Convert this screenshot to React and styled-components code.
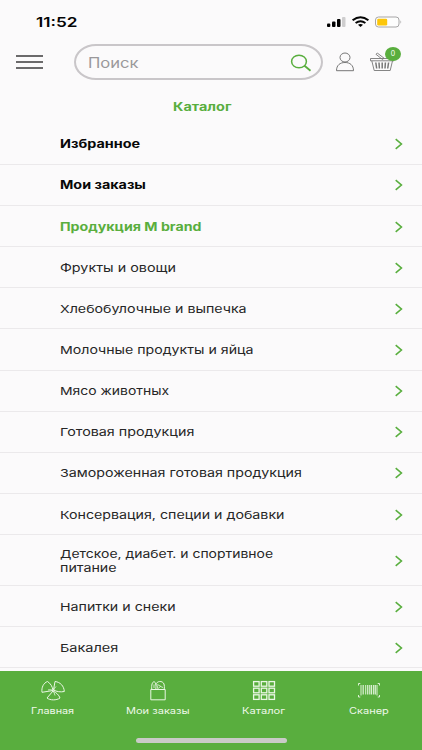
import React from 'react'
import styled, { createGlobalStyle } from 'styled-components'

const GREEN = '#59ae3e';

const GlobalStyle = createGlobalStyle`
	* {
		box-sizing: border-box;
	}

	body {
		margin: 0;
		background: #fbfafb;
		font-family: Inter, "Open Sans", sans-serif;
	}
`

const Screen = styled.div`
	display: flex;
	flex-direction: column;
	width: 422px;
	height: 750px;
	overflow: hidden;
	background: #fbfafb;
`

const StatusBar = styled.div`
	display: flex;
	justify-content: space-between;
	height: 44px;
	padding: 15px 20px 0 36px;
	color: #050505;
	font-size: 13.5px;
	font-weight: 600;
	line-height: 15px;
`

const StatusIcons = styled.svg`
	display: block;
	width: 76px;
	height: 14px;
`

const Header = styled.header`
	display: flex;
	align-items: center;
	height: 36px;
	padding: 0 20px 0 16px;
	flex: none;
`

const MenuButton = styled.div`
	display: flex;
	flex-direction: column;
	justify-content: space-between;
	width: 27px;
	height: 14px;
	margin-right: 31px;

	i {
		height: 2px;
		background: #6b6a6b;
	}
`

const Search = styled.div`
	display: flex;
	align-items: center;
	justify-content: space-between;
	width: 249px;
	height: 36px;
	padding: 1px 9px 0 12px;
	border: 2px solid #c9c6c9;
	border-radius: 22px / 18px;
	color: #9a989a;
	font-size: 14px;
`

const SearchIcon = styled.svg`
	width: 22px;
	height: 18px;
`

const UserIcon = styled.svg`
	width: 20px;
	height: 20px;
	margin-left: 12px;
`

const Basket = styled.div`
	position: relative;
	height: 20px;
	margin-left: 14px;

	svg {
		display: block;
		width: 26px;
		height: 20px;
	}
`

const Badge = styled.span`
	position: absolute;
	top: -5px;
	left: 16px;
	width: 16px;
	height: 14px;
	border-radius: 50%;
	background: ${GREEN};
	color: #fff;
	font-size: 7px;
	line-height: 14px;
	text-align: center;
`

const Title = styled.h1`
	display: flex;
	justify-content: center;
	align-items: center;
	flex: none;
	height: 43.7px;
	margin: 0;
	padding: 10px 18px 0 0;
	color: ${GREEN};
	font-size: 11.5px;
	font-weight: 700;
`

const List = styled.div`
	flex: 1;
`

const Row = styled.div`
	display: flex;
	align-items: center;
	justify-content: space-between;
	height: ${(p) => (p.$tall ? 51 : 41.15)}px;
	padding: 1px 18px 0 60px;
	border-bottom: 1px solid #ebe9eb;
	color: ${(p) => (p.$accent ? GREEN : p.$bold ? '#080808' : '#262626')};
	font-size: ${(p) => (p.$bold ? 11.5 : 11)}px;
	font-weight: ${(p) => (p.$bold ? 650 : 400)};
	line-height: 14px;
`

const Lines = styled.div`
	display: flex;
	flex-direction: column;
`

const Chevron = styled.svg`
	width: 10px;
	height: 12px;
`

const TabBar = styled.nav`
	display: grid;
	grid-template-columns: repeat(4, 1fr);
	grid-template-rows: 67px 5px;
	flex: none;
	height: 79px;
	background: ${GREEN};
`

const Tab = styled.div`
	display: flex;
	flex-direction: column;
	align-items: center;
	padding-top: 9px;
	color: #eef8e9;
	font-size: 8.8px;
	line-height: 12px;

	svg {
		width: 24px;
		height: 21px;
		margin-bottom: 4px;
	}
`

const HomeIndicator = styled.div`
	grid-column: 1 / -1;
	justify-self: center;
	width: 151px;
	height: 5px;
	border-radius: 3px;
	background: #c9cbc7;
`

const FitBox = styled.span`
	display: block;
	flex: none;
	white-space: nowrap;

	span {
		display: inline-block;
		transform-origin: 0 50%;
	}
`

// Widens the letters until the text fills the given width.
function Fit({ width, children }) {
	const ref = React.useRef(null);
	const [scale, setScale] = React.useState(1);
	React.useLayoutEffect(() => {
		setScale(width / ref.current.offsetWidth);
	}, [width, children]);
	return (
		<FitBox style={{ width }}>
			<span ref={ref} style={{ transform: `scaleX(${scale})` }}>{children}</span>
		</FitBox>
	);
}

const rows = [
	{ lines: [['Избранное', 80]], bold: true },
	{ lines: [['Мои заказы', 86]], bold: true },
	{ lines: [['Продукция M brand', 142]], bold: true, accent: true },
	{ lines: [['Фрукты и овощи', 116]] },
	{ lines: [['Хлебобулочные и выпечка', 186]] },
	{ lines: [['Молочные продукты и яйца', 193]] },
	{ lines: [['Мясо животных', 109]] },
	{ lines: [['Готовая продукция', 134]] },
	{ lines: [['Замороженная готовая продукция', 242]] },
	{ lines: [['Консервация, специи и добавки', 225]] },
	{ lines: [['Детское, диабет. и спортивное', 213], ['питание', 57]] },
	{ lines: [['Напитки и снеки', 115]] },
	{ lines: [['Бакалея', 58]] },
];

function HomeIcon() {
	return (
		<svg viewBox="0 0 24 21" fill="none" stroke="#eaf7e4" strokeWidth="1" strokeLinejoin="round">
			<path d="M12 10.500 1 12.300C.3 7.500 2.500 3 6.500 1.500 9.500 3.500 11.500 6.500 12 10.500Z" />
			<path d="M12.500 10 14 1.500c5.200.5 9 4.500 9.300 10-3.800.8-7.600.2-10.800-1.500Z" />
			<path d="M12 11 6 18c3 2.400 9.500 2.600 13 0-1-3-3.800-5.500-7-7Z" />
			<path d="M7 10c1.500-.5 3.500-.4 5 .5M15 6.500c-1.200 1-2 2.300-2.500 4M14 15.500c-.3-1.800-1-3.300-2-4.500" strokeWidth=".8" />
		</svg>
	);
}

function BagIcon() {
	return (
		<svg viewBox="0 0 24 21" fill="none" stroke="#eaf7e4" strokeWidth="1">
			<path d="M4.800 9.500h14.400v10.300H4.800z" />
			<path d="M5.800 9.500C5.300 5 6.300 1.800 8 1.800S10.300 5 9.800 9.500M10 4.500c.5-3.500 6.500-4.300 8-.5.5 1.500.5 3.500.2 5.500" />
			<path d="M8 4.500v3.500M10.800 4.500 12 9M11.500 4.500l3.500 2M12.500 8l2-1.500 2.500 1" strokeWidth=".8" />
		</svg>
	);
}

function CatalogIcon() {
	return (
		<svg viewBox="0 0 24 21" fill="none" stroke="#eaf7e4" strokeWidth="1.300">
			{[1.600, 8.200, 14.800].map((y) => [1.600, 9.300, 17].map((x) => (
				<rect key={x + '-' + y} x={x} y={y} width="5.500" height="4.600" />
			)))}
		</svg>
	);
}

function ScannerIcon() {
	return (
		<svg viewBox="0 0 24 21" fill="none" stroke="#eaf7e4">
			<path d="M1.500 5.500V3.500h1.800M20.700 3.500h1.800v2M1.500 15v2h1.800M20.700 17h1.800v-2" strokeWidth=".9" />
			<path d="M4 5v10.500M8.700 5v9.500M14.500 5v9.500M20 5v10.500" strokeWidth=".9" />
			<path d="M6.200 5v9.500M10.700 5v9.500M12.800 5v9.500M16.500 5v9.500M18.300 5v9.500" strokeWidth="1.300" opacity=".85" />
		</svg>
	);
}

const tabs = [
	{ label: 'Главная', width: 43, Icon: HomeIcon },
	{ label: 'Мои заказы', width: 64, Icon: BagIcon },
	{ label: 'Каталог', width: 43, Icon: CatalogIcon },
	{ label: 'Сканер', width: 40, Icon: ScannerIcon },
];

export default function App() {
	return (
		<Screen>
			<GlobalStyle />
			<StatusBar>
				<Fit width={42}>11:52</Fit>
				<StatusIcons viewBox="0 0 76 14">
					<rect x="1" y="8.500" width="3.300" height="3.500" rx="1" />
					<rect x="6" y="6.500" width="3.500" height="5.500" rx="1" />
					<rect x="11" y="4" width="3.500" height="8" rx="1" />
					<rect x="16" y="2" width="3.500" height="10" rx="1" fill="#cfcecf" />
					<g fill="none" stroke="#050505" strokeWidth="2">
						<path d="M26.600 5.300q7.900-6 15.800 0" />
						<path d="M29.600 8q4.900-3.500 9.800 0" />
					</g>
					<path d="m32 9.700q2.500-1.600 5 0l-2.500 2.200z" />
					<rect x="49.500" y="2" width="23.500" height="10" rx="3" fill="#fdfdfd" stroke="#a6a5a6" />
					<rect x="51.200" y="3.700" width="10" height="6.700" rx="1.200" fill="#fcc60a" />
					<path d="M74.500 5.300q1.500 1.700 0 3.400z" fill="#999" />
				</StatusIcons>
			</StatusBar>
			<Header>
				<MenuButton><i /><i /><i /></MenuButton>
				<Search>
					<Fit width={51}>Поиск</Fit>
					<SearchIcon viewBox="0 0 22 18" fill="none" stroke={GREEN} strokeWidth="1.500">
						<ellipse cx="9" cy="7.500" rx="7.400" ry="6.300" />
						<path d="m14.500 11.700 6 5" strokeWidth="1.800" />
					</SearchIcon>
				</Search>
				<UserIcon viewBox="0 0 20 20" fill="none" stroke="#777" strokeWidth="1">
					<ellipse cx="10" cy="5.500" rx="5" ry="4.500" />
					<path d="M1.500 18.700c0-5.500 3.500-8.200 8.500-8.200s8.500 2.700 8.500 8.200z" />
				</UserIcon>
				<Basket>
					<svg viewBox="0 0 26 20" fill="none" stroke="#777" strokeWidth=".9">
						<path d="M1.500 6.500h23.500v2.300H1.500zM2.800 8.800 5.200 18.500h16l2.300-9.700" />
						<path d="m6.800 10.500.9 6M10 10.500l.4 6M13.200 10.500v6M16.400 10.500l-.4 6M19.600 10.500l-.9 6" strokeWidth="1.500" />
						<path d="m7 2.300 1.300-1.300 6.700 5.200-1.500 1.300z" />
					</svg>
					<Badge>0</Badge>
				</Basket>
			</Header>
			<Title><Fit width={59}>Каталог</Fit></Title>
			<List>
				{rows.map((row) => (
					<Row key={row.lines[0][0]} $bold={row.bold} $accent={row.accent} $tall={row.lines.length > 1}>
						<Lines>
							{row.lines.map(([text, width]) => (
								<Fit key={text} width={width}>{text}</Fit>
							))}
						</Lines>
						<Chevron viewBox="0 0 10 12" fill="none" stroke={GREEN} strokeWidth="1.600">
							<path d="m1.700 1.200 5.700 4.800L1.700 10.800" />
						</Chevron>
					</Row>
				))}
			</List>
			<TabBar>
				{tabs.map(({ label, width, Icon }) => (
					<Tab key={label}>
						<Icon />
						<Fit width={width}>{label}</Fit>
					</Tab>
				))}
				<HomeIndicator />
			</TabBar>
		</Screen>
	);
}
